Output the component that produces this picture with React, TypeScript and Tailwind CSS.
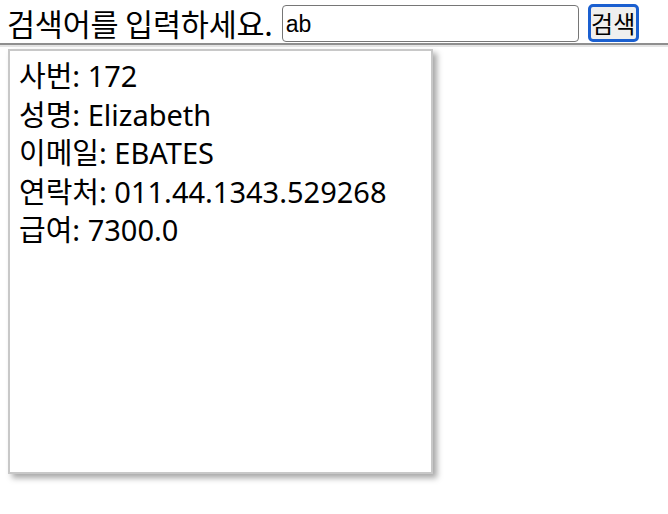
import React, { useState } from 'react';

const employee = {
  id: 172,
  name: 'Elizabeth',
  email: 'EBATES',
  phone: '011.44.1343.529268',
  salary: '7300.0',
};

export default function App() {
  const [keyword, setKeyword] = useState('ab');

  return (
    <div className="w-[668px] h-[514px] bg-white text-black overflow-hidden">
      {/* search bar */}
      <div className="flex items-center h-[44px] pl-[7px] pt-[2px]">
        <span className="text-[30.5px] leading-none tracking-[-0.2px] font-['Noto_Sans_CJK_KR',sans-serif]">
          검색어를 입력하세요.
        </span>
        <input
          value={keyword}
          onChange={(e) => setKeyword(e.target.value)}
          className="ml-[9px] w-[297px] h-[37px] px-[3px] pt-[3px] border border-[#767676] rounded-[4px] text-[23px] font-['Liberation_Sans',sans-serif] outline-none"
        />
        <button className="ml-[9px] w-[51px] h-[38px] rounded-[5px] border-[3px] border-[#1a5fd0] bg-[#efefef] text-[24px] leading-none font-['Noto_Sans_CJK_KR',sans-serif] flex items-center justify-center">
          검색
        </button>
      </div>

      {/* divider */}
      <div className="mt-[-1px] border-t-2 border-[#8f8f8f]" />
      <div className="border-t-2 border-[#e4e4e4]" />

      {/* result card */}
      <div className="ml-[8px] mt-[2px] w-[425px] h-[425px] border-2 border-[#c8c8c8] bg-white shadow-[4px_4px_6px_rgba(0,0,0,0.35)] px-[9px] pt-[6px]">
        <div className="text-[29px] leading-[38.5px] font-['Noto_Sans','Noto_Sans_CJK_KR',sans-serif]">
          <div>사번: {employee.id}</div>
          <div>성명: {employee.name}</div>
          <div>이메일: {employee.email}</div>
          <div>연락처: {employee.phone}</div>
          <div>급여: {employee.salary}</div>
        </div>
      </div>
    </div>
  );
}
